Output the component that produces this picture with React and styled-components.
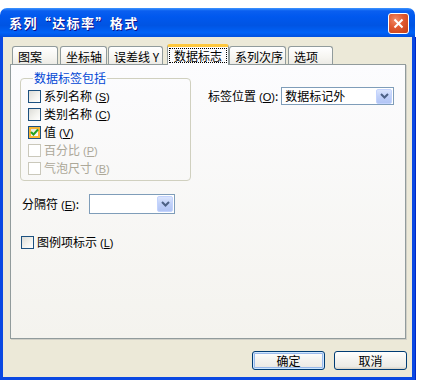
import React from 'react';
import styled, { createGlobalStyle } from 'styled-components';

const GlobalStyle = createGlobalStyle`
  html, body {
    margin: 0;
    padding: 0;
    background: #fff;
  }
  body {
    font-family: "Noto Sans CJK SC", "Noto Sans", sans-serif;
    font-size: 12px;
    color: #000;
  }
`;

const Window = styled.div`
  width: 415px;
  margin-top: 8px;
  display: flex;
  flex-direction: column;
`;

const TitleBar = styled.div`
  height: 29px;
  box-sizing: border-box;
  border-radius: 7px 7px 0 0;
  background: linear-gradient(
    to bottom,
    #3d95ff 0%,
    #0a5ff0 10%,
    #0058ee 30%,
    #0054e3 60%,
    #0062f7 85%,
    #0050df 100%
  );
  display: flex;
  align-items: center;
  justify-content: space-between;
  padding: 1px 6px 0 9px;
`;

const Title = styled.div`
  color: #fff;
  font-weight: bold;
  font-size: 13px;
  letter-spacing: 1.4px;
  line-height: 16px;
  text-shadow: 1px 1px #0f1089;
`;

const CloseButton = styled.div`
  width: 19px;
  height: 19px;
  border: 1px solid #fff;
  border-radius: 3px;
  background: radial-gradient(circle at 35% 30%, #f28b68 0%, #e0582f 45%, #c23e17 100%);
  display: flex;
  align-items: center;
  justify-content: center;
`;

const Frame = styled.div`
  border: 3px solid #0a48e2;
  border-top: none;
  box-shadow: -1px 0 0 #0028c8, 1px 0 0 #0028c8, 0 1px 0 #0028c8;
`;

const Client = styled.div`
  height: 340px;
  box-sizing: border-box;
  background: #ece9d8;
  padding: 7px 5px 7px 7px;
  display: flex;
  flex-direction: column;
`;

const TabStrip = styled.div`
  display: flex;
  align-items: flex-end;
  height: 20px;
  padding-left: 2px;
  position: relative;
  z-index: 1;
`;

const Tab = styled.div`
  box-sizing: border-box;
  width: ${p => p.w}px;
  margin-left: ${p => p.ml || 0}px;
  height: ${p => (p.active ? 21 : 18)}px;
  margin-bottom: ${p => (p.active ? -1 : 0)}px;
  border: 1px solid #919b9c;
  border-bottom: none;
  border-top: ${p => (p.active ? '3px solid #ffc83c' : '1px solid #919b9c')};
  border-radius: 3px 3px 0 0;
  background: ${p =>
    p.active ? '#fcfcfe' : 'linear-gradient(to bottom, #fff 0%, #f6f5f1 60%, #ecebe6 100%)'};
  padding: ${p => (p.active ? '1px 1px 0' : '3px 0 0 5px')};
  line-height: 14px;
  white-space: nowrap;
`;

const FocusLabel = styled.div`
  border: 1px dotted #000;
  height: 15px;
  line-height: 14px;
  padding-left: 4px;
  box-sizing: border-box;
`;

const Panel = styled.div`
  height: 275px;
  box-sizing: border-box;
  margin-right: 1px;
  border: 1px solid #919b9c;
  box-shadow: 1px 1px 0 #d0cfc6;
  background: linear-gradient(to bottom, #fcfcfe 0%, #f4f3ee 100%);
  padding: 6px 0 0 9px;
  display: flex;
  gap: 17px;
`;

const LeftCol = styled.div`
  display: flex;
  flex-direction: column;
`;

const GroupBox = styled.fieldset`
  margin: 0;
  width: 171px;
  box-sizing: border-box;
  border: 1px solid #d0d0bf;
  border-radius: 4px;
  padding: 2px 0 3px 7px;
`;

const Legend = styled.legend`
  color: #0046d5;
  margin-left: 5px;
  padding: 0 1px;
  line-height: 14px;
`;

const CheckRow = styled.label`
  display: flex;
  align-items: center;
  height: 18px;
  gap: 3px;
  color: ${p => (p.disabled ? '#aca899' : '#000')};
  line-height: 14px;
  white-space: nowrap;
`;

const Box = styled.span`
  width: 13px;
  height: 13px;
  box-sizing: border-box;
  border: 1px solid ${p => (p.disabled ? '#cac8bb' : '#1c5180')};
  background: ${p =>
    p.disabled ? '#fff' : 'linear-gradient(135deg, #dcdcd7 0%, #f4f4f0 60%, #fff 100%)'};
  box-shadow: ${p => (p.hot ? 'inset 0 0 0 2px #f8b636' : 'none')};
  display: flex;
  align-items: center;
  justify-content: center;
  flex: none;
`;

const KeyText = styled.span`
  margin-left: 3px;
  font-family: "Liberation Sans", "Noto Sans", sans-serif;
  font-size: 11px;
`;

const FieldRow = styled.div`
  display: flex;
  align-items: center;
  margin-top: ${p => p.mt || 0}px;
  margin-left: ${p => p.ml || 0}px;
  white-space: nowrap;
  line-height: 14px;
`;

const Combo = styled.div`
  width: ${p => p.w}px;
  height: ${p => p.h}px;
  box-sizing: border-box;
  border: 1px solid #7f9db9;
  background: #fff;
  display: flex;
  align-items: center;
  justify-content: space-between;
  padding: 0 1px 0 3px;
  margin-left: ${p => p.ml || 0}px;
  line-height: 14px;
`;

const ComboArrow = styled.span`
  width: 16px;
  height: ${p => p.h}px;
  box-sizing: border-box;
  border-radius: 2px;
  border: 1px solid #c3d3fd;
  background: linear-gradient(to bottom, #dbe5fd 0%, #c0d0f9 50%, #b2c5f5 100%);
  display: flex;
  align-items: center;
  justify-content: center;
`;

const RightCol = styled.div`
  padding-top: 16px;
`;

const ButtonRow = styled.div`
  display: flex;
  justify-content: flex-end;
  gap: 9px;
  margin-top: 12px;
`;

const Button = styled.button`
  width: 73px;
  height: 19px;
  padding: 0;
  border: 1px solid #003c74;
  border-radius: 3px;
  font-family: inherit;
  font-size: 12px;
  line-height: 14px;
  color: #000;
  background: linear-gradient(to bottom, #fff 0%, #f3f2ee 50%, #ecebe6 85%, #d6d0c5 100%);
  box-shadow: ${p =>
    p.primary ? 'inset 0 0 0 1px #cee7ff, inset 0 0 0 2px #98b8ea' : 'none'};
`;

const Key = ({ k }) => (
  <KeyText>
    (<u>{k}</u>)
  </KeyText>
);

const Check = () => (
  <svg width="9" height="9" viewBox="0 0 9 9">
    <polyline points="1,4 3.5,6.5 8,1.5" fill="none" stroke="#21a121" strokeWidth="2" />
  </svg>
);

const Chevron = () => (
  <svg width="9" height="6" viewBox="0 0 9 6">
    <polyline points="1,1 4.5,4.5 8,1" fill="none" stroke="#4d6185" strokeWidth="2" />
  </svg>
);

const CheckItem = ({ text, k, checked, disabled, hot }) => (
  <CheckRow disabled={disabled}>
    <Box disabled={disabled} hot={hot}>
      {checked && <Check />}
    </Box>
    <span>
      {text}
      <Key k={k} />
    </span>
  </CheckRow>
);

const tabs = [
  { label: '图案', w: 46, ml: 0 },
  { label: '坐标轴', w: 47, ml: 2 },
  { label: '误差线 Y', w: 55, ml: 1 },
  { label: '数据标志', w: 62, ml: 4, active: true },
  { label: '系列次序', w: 57, ml: 0 },
  { label: '选项', w: 45, ml: 2 },
];

export default function App() {
  return (
    <>
      <GlobalStyle />
      <Window>
        <TitleBar>
          <Title>系列“达标率”格式</Title>
          <CloseButton>
            <svg width="11" height="11" viewBox="0 0 11 11">
              <path d="M1.5 1.5 L9.5 9.5 M9.5 1.5 L1.5 9.5" stroke="#fff" strokeWidth="2" />
            </svg>
          </CloseButton>
        </TitleBar>
        <Frame>
          <Client>
            <TabStrip>
              {tabs.map(t => (
                <Tab key={t.label} w={t.w} ml={t.ml} active={t.active}>
                  {t.active ? <FocusLabel>{t.label}</FocusLabel> : t.label}
                </Tab>
              ))}
            </TabStrip>
            <Panel>
              <LeftCol>
                <GroupBox>
                  <Legend>数据标签包括</Legend>
                  <CheckItem text="系列名称" k="S" />
                  <CheckItem text="类别名称" k="C" />
                  <CheckItem text="值" k="V" checked hot />
                  <CheckItem text="百分比" k="P" disabled />
                  <CheckItem text="气泡尺寸" k="B" disabled />
                </GroupBox>
                <FieldRow mt={13} ml={2}>
                  <span>
                    分隔符<Key k="E" />:
                  </span>
                  <Combo w={86} h={20} ml={10}>
                    <span />
                    <ComboArrow h={16}>
                      <Chevron />
                    </ComboArrow>
                  </Combo>
                </FieldRow>
                <FieldRow mt={19} ml={1}>
                  <CheckItem text="图例项标示" k="L" />
                </FieldRow>
              </LeftCol>
              <RightCol>
                <FieldRow>
                  <span>
                    标签位置<Key k="O" />:
                  </span>
                  <Combo w={113} h={18} ml={3}>
                    <span>数据标记外</span>
                    <ComboArrow h={15}>
                      <Chevron />
                    </ComboArrow>
                  </Combo>
                </FieldRow>
              </RightCol>
            </Panel>
            <ButtonRow>
              <Button primary>确定</Button>
              <Button>取消</Button>
            </ButtonRow>
          </Client>
        </Frame>
      </Window>
    </>
  );
}
